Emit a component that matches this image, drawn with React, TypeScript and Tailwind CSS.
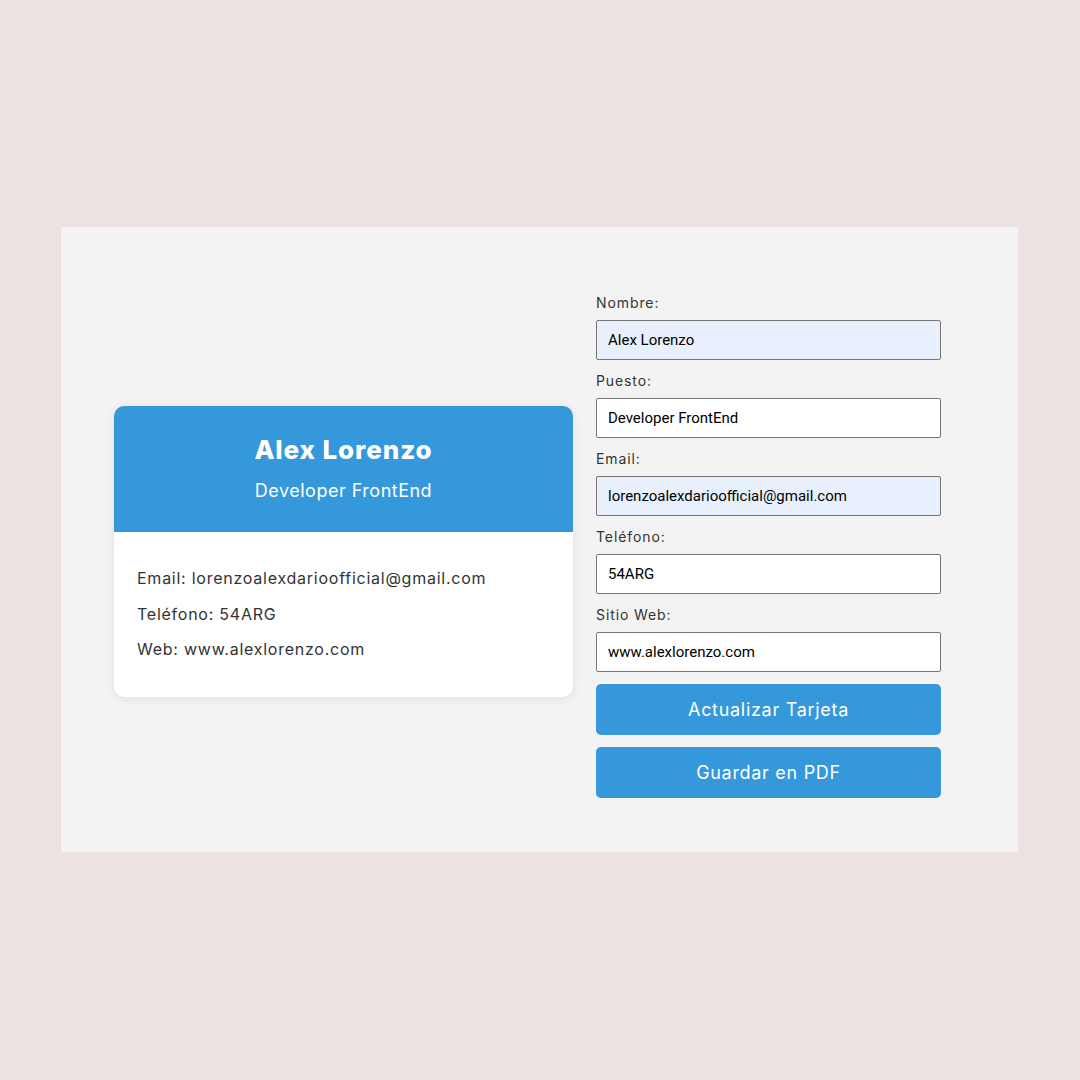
import React from "react";

const poppins = { fontFamily: "Inter, 'Open Sans', sans-serif" };

function Field({ label, value, autofill }: { label: string; value: string; autofill?: boolean }) {
  return (
    <div className="flex flex-col">
      <label className="text-[14px] leading-[20px] tracking-[0.9px] text-[#333]" style={poppins}>
        {label}
      </label>
      <input
        readOnly
        value={value}
        className={`mt-[7px] h-[40px] w-full rounded-[2px] border border-[#767676] px-[11px] text-[15px] text-black outline-none ${
          autofill ? "bg-[#e8f0fe]" : "bg-white"
        }`}
        style={{ fontFamily: "Roboto, 'Liberation Sans', Arial, sans-serif" }}
      />
    </div>
  );
}

export default function App() {
  return (
    <div className="min-h-[1080px] w-[1080px] bg-[#ece2e1] pt-[227px]" style={poppins}>
      <div className="ml-[61px] flex h-[625px] w-[957px] items-start bg-[#f3f3f3] pl-[53px]">
        <div className="mt-[179px] w-[459px] overflow-hidden rounded-[10px] bg-white shadow-[0_2px_10px_rgba(0,0,0,0.08)]">
          <div className="flex h-[126px] flex-col items-center bg-[#3498db] pt-[28px] text-white">
            <h1 className="text-[26px] font-extrabold leading-[32px] tracking-[0.9px]">Alex Lorenzo</h1>
            <p className="mt-[14px] text-[18px] leading-[22px] tracking-[0.5px]">Developer FrontEnd</p>
          </div>
          <div className="flex flex-col gap-[11px] px-[23px] pb-[35px] pt-[34px] text-[16px] leading-[24.5px] tracking-[0.75px] text-[#333]">
            <p>Email: lorenzoalexdarioofficial@gmail.com</p>
            <p>Teléfono: 54ARG</p>
            <p>Web: www.alexlorenzo.com</p>
          </div>
        </div>
        <div className="ml-[23px] mt-[66px] flex w-[345px] flex-col gap-[11px]">
          <Field label="Nombre:" value="Alex Lorenzo" autofill />
          <Field label="Puesto:" value="Developer FrontEnd" />
          <Field label="Email:" value="lorenzoalexdarioofficial@gmail.com" autofill />
          <Field label="Teléfono:" value="54ARG" />
          <Field label="Sitio Web:" value="www.alexlorenzo.com" />
          <div className="mt-[1px] flex flex-col gap-[12px]">
            <button className="h-[51px] w-full rounded-[5px] bg-[#3498db] text-[18px] tracking-[0.7px] text-white">
              Actualizar Tarjeta
            </button>
            <button className="h-[51px] w-full rounded-[5px] bg-[#3498db] text-[18px] tracking-[0.7px] text-white">
              Guardar en PDF
            </button>
          </div>
        </div>
      </div>
    </div>
  );
}
